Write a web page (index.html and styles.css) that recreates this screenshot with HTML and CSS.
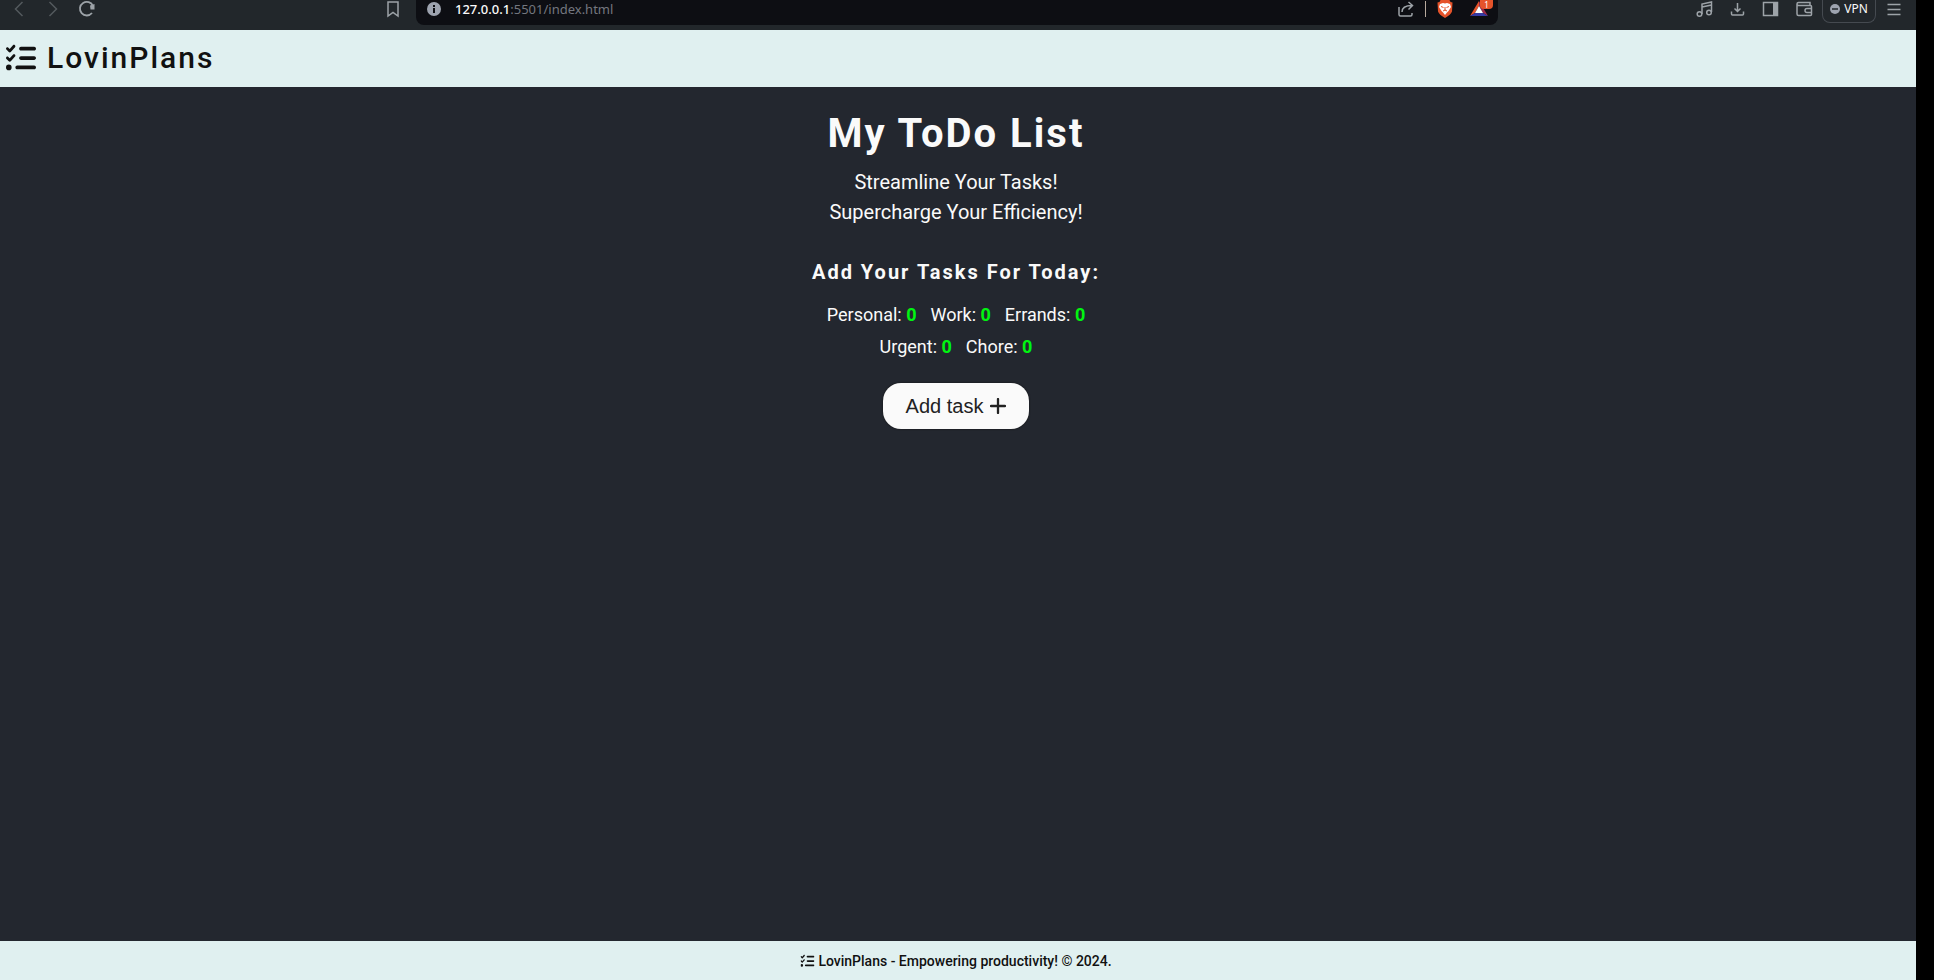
FILE: index.html
```html
<!DOCTYPE html>
<html lang="en">
<head>
<meta charset="utf-8">
<title>LovinPlans</title>
<link rel="stylesheet" href="styles.css">
</head>
<body>
<svg class="defs" aria-hidden="true">
  <symbol id="list-check" viewBox="0 0 512 512"><path d="M152.100 38.200c9.900 8.900 10.700 24 1.800 33.900l-72 80c-4.400 4.900-10.600 7.800-17.200 7.900s-12.900-2.400-17.600-7L7 113C-2.300 103.600-2.300 88.400 7 79s24.600-9.400 33.900 0l22.100 22.100 55.100-61.200c8.900-9.900 24-10.700 33.900-1.800zm0 160c9.900 8.900 10.700 24 1.800 33.900l-72 80c-4.400 4.900-10.600 7.800-17.200 7.900s-12.900-2.400-17.600-7L7 273c-9.400-9.400-9.400-24.600 0-33.900s24.600-9.400 33.900 0l22.100 22.100 55.100-61.200c8.900-9.900 24-10.700 33.900-1.800zM224 96c0-17.700 14.300-32 32-32h224c17.700 0 32 14.300 32 32s-14.300 32-32 32H256c-17.700 0-32-14.300-32-32zm0 160c0-17.700 14.300-32 32-32h224c17.700 0 32 14.300 32 32s-14.300 32-32 32H256c-17.700 0-32-14.300-32-32zm-64 160c0-17.700 14.300-32 32-32h288c17.700 0 32 14.300 32 32s-14.300 32-32 32H192c-17.700 0-32-14.300-32-32zM48 368a48 48 0 1 1 0 96 48 48 0 1 1 0-96z"/></symbol>
</svg>
<div class="browser">
  <nav class="toolbar" aria-label="Browser toolbar">
    <div class="nav-buttons">
      <button class="tool dim" aria-label="Back"><svg width="18" height="18" viewBox="0 0 18 18"><path d="M12.500 2 5.500 9l7 7"/></svg></button>
      <button class="tool dim" aria-label="Forward"><svg width="18" height="18" viewBox="0 0 18 18"><path d="m5.500 2 7 7-7 7"/></svg></button>
      <button class="tool" aria-label="Reload"><svg width="18" height="18" viewBox="0 0 18 18"><path stroke-width="1.800" d="M14 13A6.800 6.800 0 1 1 15 6"/><path class="fill" d="M12 5.500 16.500 4v5.500h-4z"/></svg></button>
    </div>
    <button class="tool" aria-label="Bookmark"><svg width="18" height="18" viewBox="0 0 18 18"><path d="M4 2h10v14l-5-3.500L4 16z"/></svg></button>
    <div class="address">
      <svg width="14" height="14" viewBox="0 0 14 14"><circle cx="7" cy="7" r="7" fill="#9da3af"/><path d="M7 6v5M7 3v2" stroke="#0d0e13" stroke-width="2"/></svg>
      <span class="url"><b>127.0.0.1</b>:5501/index.html</span>
      <button class="tool" aria-label="Share"><svg width="18" height="18" viewBox="0 0 18 18"><path d="M2 7v7.500q0 1.500 1.500 1.500h10q1.500 0 1.500-1.500V13M5 12c0-4 3-6.500 10-6.500M11.500 2 15.500 5.500l-4 4"/></svg></button>
      <span class="divider"></span>
      <button class="tool" aria-label="Brave Shields"><svg width="18" height="18" viewBox="0 0 18 18"><path fill="#e5532a" stroke="none" d="M4.500 0h9l1 2 2 .5-.5 9q-1 3-7 6.500Q3 14.500 2 11.500l-.5-9 2-.5z"/><path fill="#fff" stroke="none" d="m4 4 3-1 2 .5 2-.5 3 1 1 3-2.500 4-1.500 1.500L9 15l-2-2.500L5.500 11 3 7z"/><path stroke="#e5532a" stroke-width="1" d="m5 6.500 2.500 1M13 6.500l-2.500 1M9 7v3.500M7 11l2-1 2 1"/></svg></button>
      <button class="tool rewards" aria-label="Brave Rewards"><svg width="18" height="18" viewBox="0 0 18 18"><path fill="#e5532a" stroke="none" d="M9 1 0 16l5-3 4-7z"/><path fill="#9e2a4a" stroke="none" d="m9 1 9 15-5-3-4-7z"/><path fill="#363aa3" stroke="none" d="m0 16 5-3h8l5 3z"/><path fill="#fff" stroke="none" d="m9 6 4 7H5z"/></svg><span class="badge">1</span></button>
    </div>
    <div class="actions">
      <button class="tool" aria-label="Playlist"><svg width="18" height="18" viewBox="0 0 18 18"><path d="M6 14V4l9.500-2v10M6 7l9.500-2"/><circle cx="3.500" cy="14" r="2.300"/><circle cx="13" cy="12.500" r="2.300"/></svg></button>
      <button class="tool" aria-label="Downloads"><svg width="18" height="18" viewBox="0 0 18 18"><path d="M8.500 3v8.500M5.500 8.500l3 3 3-3M2.500 11.500V14q0 1 1 1h10q1 0 1-1v-2.500"/></svg></button>
      <button class="tool" aria-label="Sidebar"><svg width="18" height="18" viewBox="0 0 18 18"><path d="M1.500 2.500h14v13h-14z"/><path class="fill" d="M11 2h5v14h-5z"/></svg></button>
      <button class="tool" aria-label="Wallet"><svg width="18" height="18" viewBox="0 0 18 18"><path d="M15 5V2.500H3.500Q2 2.500 2 4t1.500 1.500h12q1 0 1 1v8q0 1-1 1h-12Q2 15.500 2 14V4M16.500 8.500H12a2 2 0 0 0 0 4h4.500z"/></svg></button>
      <button class="vpn"><svg width="10" height="10" viewBox="0 0 10 10"><circle cx="5" cy="5" r="5" fill="#9da3af"/><path d="M2 5h6" stroke="#22272b" stroke-width="1.500"/></svg>VPN</button>
      <button class="tool" aria-label="Menu"><svg width="18" height="18" viewBox="0 0 18 18"><path d="M2.500 4.500h13M2.500 9.500h13M2.500 14.500h13"/></svg></button>
    </div>
  </nav>

  <header class="site-header">
    <svg class="logo-icon" viewBox="0 0 512 512" aria-hidden="true"><use href="#list-check"/></svg>
    <span class="brand">LovinPlans</span>
  </header>

  <main class="content">
    <h1 class="title">My ToDo List</h1>
    <p class="tagline">Streamline Your Tasks!<br>Supercharge Your Efficiency!</p>
    <h2 class="subtitle">Add Your Tasks For Today:</h2>
    <ul class="counts">
      <li>Personal: <b>0</b></li>
      <li>Work: <b>0</b></li>
      <li>Errands: <b>0</b></li>
      <li>Urgent: <b>0</b></li>
      <li>Chore: <b>0</b></li>
    </ul>
    <button class="add-task">Add task <svg width="16" height="16" viewBox="0 0 16 16" aria-hidden="true"><path d="M8 1v14M1 8h14" stroke="currentColor" stroke-width="2.300" stroke-linecap="round"/></svg></button>
  </main>

  <footer class="site-footer">
    <svg class="footer-icon" viewBox="0 0 512 512" aria-hidden="true"><use href="#list-check"/></svg>
    <span>LovinPlans - Empowering productivity! © 2024.</span>
  </footer>
</div>
</body>
</html>
```
FILE: styles.css
```css
* {
  box-sizing: border-box;
  margin: 0;
  padding: 0;
}

body {
  background: #000;
  font-family: Roboto, "Liberation Sans", sans-serif;
}

button {
  border: 0;
  background: none;
}

.defs {
  display: none;
}

.browser {
  display: flex;
  flex-direction: column;
  min-height: 100vh;
  margin-right: 18px;
  background: #23272f;
  color: #fafafa;
}

.toolbar {
  display: flex;
  align-items: flex-start;
  height: 30px;
  background: #22272b;
}

.nav-buttons {
  display: flex;
  gap: 16px;
  width: 384px;
  padding-left: 10px;
}

.tool {
  display: flex;
  width: 18px;
  height: 18px;
}

.tool svg {
  fill: none;
  stroke: #9da3a8;
  stroke-width: 1.5;
}

.tool .fill {
  fill: #9da3a8;
  stroke: none;
}

.dim {
  opacity: 0.4;
}

.address {
  display: flex;
  flex: 1;
  align-items: center;
  height: 25px;
  margin: 0 198px 0 14px;
  padding: 0 10px 7px 11px;
  border-radius: 0 0 8px 8px;
  background: #0d0e13;
}

.url {
  flex: 1;
  margin-left: 14px;
  font: 13px/18px "Noto Sans", sans-serif;
  color: #74777f;
}

.url b {
  font-weight: 500;
  color: #fafafa;
}

.divider {
  width: 1px;
  height: 16px;
  margin: 0 10px;
  background: #b8aa9e;
}

.rewards {
  position: relative;
  margin-left: 16px;
}

.badge {
  position: absolute;
  top: 0;
  right: -5px;
  width: 13px;
  height: 9px;
  border-radius: 0 0 4px 4px;
  background: #e5532a;
  color: #fff;
  font: 8px/9px "Noto Sans", sans-serif;
  text-align: center;
}

.actions {
  display: flex;
  gap: 15px;
  padding-right: 13px;
}

.vpn {
  display: flex;
  align-items: center;
  justify-content: center;
  gap: 4px;
  width: 54px;
  height: 23px;
  margin: 0 -6px;
  padding-bottom: 5px;
  border: solid #454a50;
  border-width: 0 1px 1px;
  border-radius: 0 0 8px 8px;
  color: #fafafa;
  font: 12px/16px "Noto Sans", sans-serif;
}

.site-header {
  display: flex;
  align-items: center;
  gap: 11px;
  height: 57px;
  padding: 0 0 2px 6px;
  background: #e0f0f0;
  color: #111;
}

.logo-icon {
  width: 30px;
  height: 30px;
}

.brand {
  font-size: 30px;
  font-weight: 500;
  letter-spacing: 2px;
}

.content {
  display: flex;
  flex: 1;
  flex-direction: column;
  align-items: center;
  padding: 21px 4px 0 0;
  text-align: center;
}

.title {
  font-size: 40px;
  line-height: 52px;
  letter-spacing: 2px;
}

.tagline {
  margin-top: 7px;
  font-size: 20px;
  line-height: 30px;
}

.subtitle {
  margin-top: 30px;
  font-size: 20px;
  line-height: 30px;
  letter-spacing: 2px;
}

.counts {
  display: flex;
  flex-wrap: wrap;
  justify-content: center;
  column-gap: 14px;
  width: 300px;
  margin-top: 12px;
  font-size: 18px;
  line-height: 32px;
  list-style: none;
}

.counts b {
  color: #00f510;
}

.add-task {
  display: flex;
  align-items: center;
  gap: 7px;
  height: 46px;
  margin-top: 20px;
  padding: 0 23px;
  border-radius: 18px;
  background: #fafafa;
  box-shadow: 0 0 2px #111;
  color: #222;
  font: 20px/23px "Liberation Sans", sans-serif;
}

.site-footer {
  display: flex;
  align-items: center;
  justify-content: center;
  gap: 3px;
  height: 39px;
  padding-right: 4px;
  background: #e0f0f0;
  color: #111;
  font-size: 14px;
  font-weight: 500;
}

.footer-icon {
  width: 15px;
  height: 14px;
}

.logo-icon,
.footer-icon {
  fill: currentColor;
}
```
